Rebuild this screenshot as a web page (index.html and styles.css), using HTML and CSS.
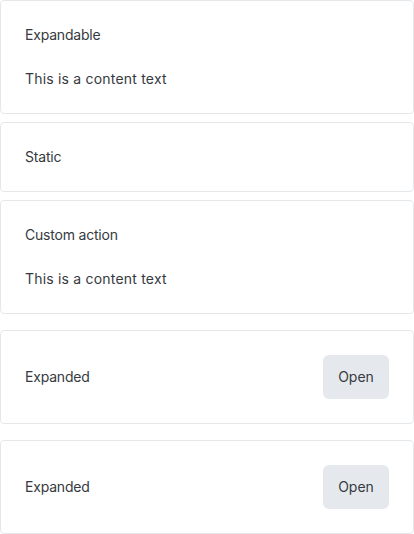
FILE: index.html
```html
<!DOCTYPE html>
<html lang="en">
<head>
<meta charset="utf-8">
<link rel="stylesheet" href="styles.css">
</head>
<body>
<div class="list">
  <div class="card">
    <div class="card-head"><span class="title">Expandable</span></div>
    <div class="card-body">This is a content text</div>
  </div>
  <div class="card">
    <div class="card-head"><span class="title">Static</span></div>
  </div>
  <div class="card">
    <div class="card-head"><span class="title">Custom action</span></div>
    <div class="card-body">This is a content text</div>
  </div>
  <div class="card card-spaced">
    <div class="card-head"><span class="title">Expanded</span><button class="btn">Open</button></div>
  </div>
  <div class="card card-spaced">
    <div class="card-head"><span class="title">Expanded</span><button class="btn">Open</button></div>
  </div>
</div>
</body>
</html>
```
FILE: styles.css
```css
html, body {
  margin: 0;
  padding: 0;
  background: #ffffff;
}
body {
  font-family: Inter, "Noto Sans", sans-serif;
  font-size: 14px;
  line-height: 20px;
  color: #363a40;
}
.list {
  display: flex;
  flex-direction: column;
  gap: 8px;
}
.card {
  border: 1px solid #e5e8eb;
  border-radius: 4px;
  padding: 24px;
  display: flex;
  flex-direction: column;
  gap: 24px;
  background: #fff;
}
.card-spaced {
  margin-top: 8px;
}
.card-head {
  display: flex;
  align-items: center;
  justify-content: space-between;
}
.title {
  letter-spacing: -0.2px;
}
.card-body {
  letter-spacing: 0.2px;
}
.btn {
  font-family: inherit;
  font-size: 14px;
  line-height: 20px;
  color: #363a40;
  background: #e5e9ee;
  border: none;
  border-radius: 6px;
  height: 44px;
  width: 66px;
  padding: 0;
}
```
